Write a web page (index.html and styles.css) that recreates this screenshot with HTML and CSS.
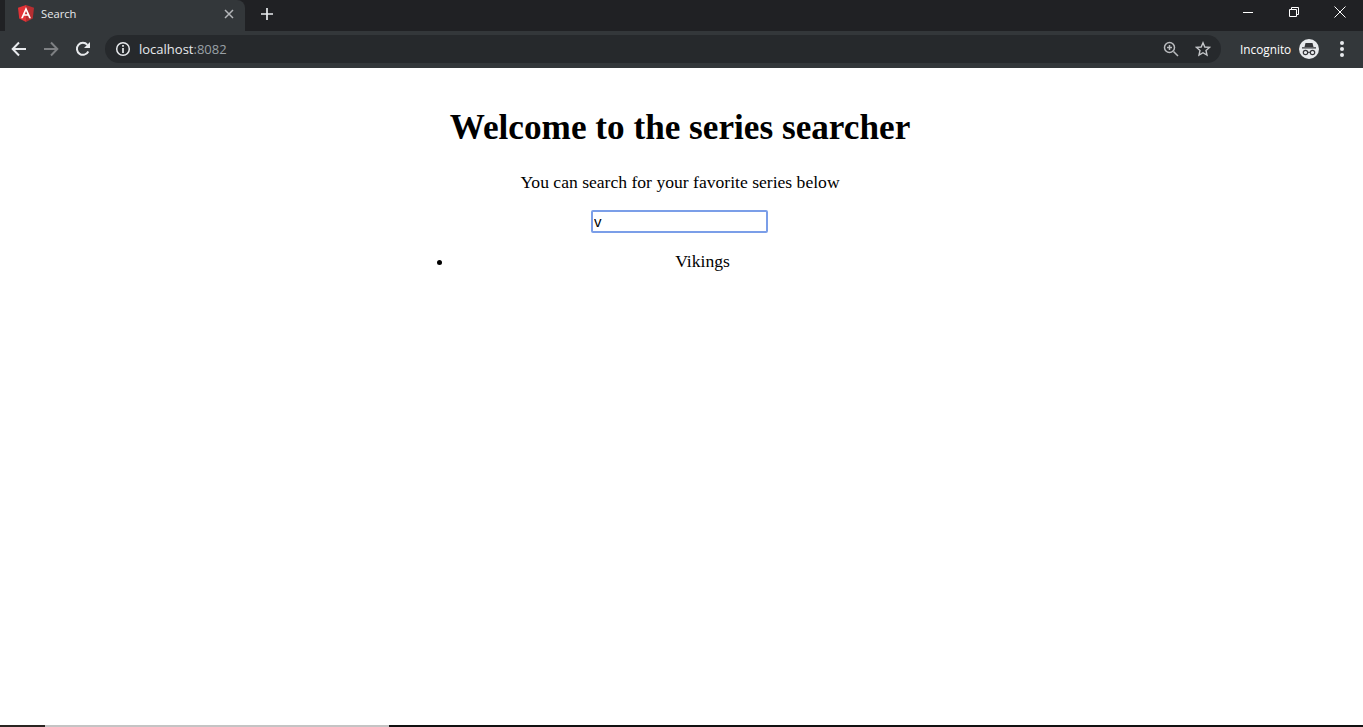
FILE: index.html
```html
<!DOCTYPE html>
<html lang="en">
<head>
  <meta charset="UTF-8">
  <title>Search</title>
  <link rel="stylesheet" href="styles.css">
</head>
<body>
  <header class="browser">
    <div class="tab-strip">
      <div class="tab">
        <svg class="tab-logo" width="16" height="17" viewBox="0 0 16 17">
          <path fill="#e23237" d="M8 0 0 2.800l1.200 10.600L8 17z"/>
          <path fill="#b52e31" d="M8 0l8 2.800-1.200 10.600L8 17z"/>
          <path fill="#fff" d="M8 2 3 13.200h1.900l1-2.500h4.200l1 2.500H13zM8 6l1.400 3.200H6.600z"/>
        </svg>
        <span class="tab-title">Search</span>
        <svg class="tab-close" width="10" height="10" viewBox="0 0 10 10">
          <path d="M1 1l8 8M9 1 1 9" stroke="#b4b6b9" stroke-width="1.500" fill="none"/>
        </svg>
      </div>
      <svg class="new-tab" width="14" height="14" viewBox="0 0 14 14">
        <path d="M7 1v12M1 7h12" stroke="#e8eaed" stroke-width="1.700" fill="none"/>
      </svg>
      <div class="window-controls">
        <svg width="12" height="12" viewBox="0 0 12 12"><path d="M1 6.500h10" stroke="#fff" fill="none"/></svg>
        <svg width="12" height="12" viewBox="0 0 12 12"><path d="M1.500 3.500h7v7h-7zM3.500 3.500v-2h7v7h-2" stroke="#fff" fill="none"/></svg>
        <svg width="12" height="12" viewBox="0 0 12 12"><path d="M.5.500l11 11M11.500.500l-11 11" stroke="#fff" fill="none"/></svg>
      </div>
    </div>
    <div class="toolbar">
      <svg class="nav-icon" width="16" height="16" viewBox="0 0 16 16">
        <path d="M15 8H2M8 1.500 1.700 8 8 14.500" stroke="#e8eaed" stroke-width="2" fill="none"/>
      </svg>
      <svg class="nav-icon" width="16" height="16" viewBox="0 0 16 16">
        <path d="M1 8h13M8 1.500 14.300 8 8 14.500" stroke="#7e8083" stroke-width="2" fill="none"/>
      </svg>
      <svg class="nav-icon" width="16" height="16" viewBox="0 0 16 16">
        <path d="M13.300 10.500A6 6 0 1 1 12.400 3.800" stroke="#e8eaed" stroke-width="2" fill="none"/>
        <path d="M15 1v6H9z" fill="#e8eaed"/>
      </svg>
      <div class="omnibox">
        <svg width="16" height="16" viewBox="0 0 16 16">
          <circle cx="8" cy="8" r="6.300" stroke="#e8eaed" stroke-width="1.500" fill="none"/>
          <path d="M8 7v5M8 4v1.700" stroke="#e8eaed" stroke-width="1.700" fill="none"/>
        </svg>
        <span class="url">localhost<span class="url-port">:8082</span></span>
        <svg class="omni-zoom" width="16" height="16" viewBox="0 0 16 16">
          <circle cx="6.500" cy="6.500" r="5" stroke="#b9bbbe" stroke-width="1.500" fill="none"/>
          <path d="M10.500 10.500 15 15M4 6.500h5M6.500 4v5" stroke="#b9bbbe" stroke-width="1.500" fill="none"/>
        </svg>
        <svg width="16" height="16" viewBox="0 0 16 16">
          <path d="M8 1.800 9.800 6l4.700.4-3.500 3.100 1 4.600L8 11.700l-4 2.400 1-4.600-3.500-3.100L6.200 6z" stroke="#c4c6c9" stroke-width="1.400" fill="none"/>
        </svg>
      </div>
      <span class="profile-name">Incognito</span>
      <svg class="profile-icon" width="20" height="20" viewBox="0 0 20 20">
        <circle cx="10" cy="10" r="10" fill="#e8eaed"/>
        <path d="M6.500 4h7l1 4h-9zM3 8.300h14v1.200H3z" fill="#35363a"/>
        <circle cx="6.500" cy="13.500" r="2.200" stroke="#35363a" stroke-width="1.200" fill="none"/>
        <circle cx="13.500" cy="13.500" r="2.200" stroke="#35363a" stroke-width="1.200" fill="none"/>
        <path d="M8.700 13.300h2.600" stroke="#35363a" fill="none"/>
      </svg>
      <div class="menu-dots"><i></i><i></i><i></i></div>
    </div>
  </header>

  <main class="page">
    <div class="intro">
      <h1>Welcome to the series searcher</h1>
      <p>You can search for your favorite series below</p>
      <input class="search-box" type="text" value="v">
    </div>
    <ul class="results">
      <li>Vikings</li>
    </ul>
  </main>

  <div class="taskbar-edge">
    <div class="edge-start"></div>
    <div class="edge-active"></div>
    <div class="edge-rest"></div>
  </div>
</body>
</html>
```

FILE: styles.css
```css
body {
  margin: 0;
  height: 100vh;
  display: flex;
  flex-direction: column;
  overflow: hidden;
  background-color: #fff;
  color: #000;
  font-family: "Liberation Serif", serif;
  font-size: 17.6px;
}
.browser {
  font-family: "Open Sans", sans-serif;
  color: #e8eaed;
}
.tab-strip {
  height: 31px;
  display: flex;
  align-items: center;
  background-color: #202124;
  padding-left: 5px;
}
.tab {
  width: 240px;
  height: 31px;
  box-sizing: border-box;
  display: flex;
  align-items: center;
  padding: 0 11px 4px 13px;
  background-color: #33373a;
  border-radius: 0 8px 0 0;
}
.tab-logo {
  flex: none;
}
.tab-title {
  margin-left: 7px;
  font-size: 11.200px;
  flex: 1;
}
.new-tab {
  margin: 0 0 4px 15px;
}
.window-controls {
  margin-left: auto;
  display: flex;
  gap: 34px;
  padding: 0 17px 8px 0;
}
.toolbar {
  height: 37px;
  box-sizing: border-box;
  display: flex;
  align-items: center;
  background-color: #33373a;
  padding: 0 0 2px 11px;
}
.nav-icon {
  margin-right: 16px;
  flex: none;
}
.omnibox {
  width: 1116px;
  height: 28px;
  box-sizing: border-box;
  margin-left: -2px;
  display: flex;
  align-items: center;
  padding: 0 10px;
  background-color: #26292c;
  border-radius: 14px;
}
.url {
  margin-left: 8px;
  font-size: 13px;
  flex: 1;
}
.url-port {
  color: #9aa0a6;
}
.omni-zoom {
  margin-right: 16px;
}
.profile-name {
  margin-left: 19px;
  font-size: 11.800px;
  color: #fff;
}
.profile-icon {
  margin-left: 8px;
}
.menu-dots {
  margin-left: 21px;
  display: flex;
  flex-direction: column;
  gap: 2px;
}
.menu-dots i {
  width: 4px;
  height: 4px;
  background-color: #e8eaed;
  border-radius: 50%;
}
.page {
  flex: 1;
  text-align: center;
  padding-top: 39px;
}
.intro {
  padding-right: 3px;
}
h1 {
  margin: 0;
  font-size: 35.200px;
  line-height: 41px;
}
p {
  margin: 24px 0 0;
  line-height: 21px;
}
.search-box {
  display: block;
  width: 177px;
  height: 23px;
  box-sizing: border-box;
  margin: 17px calc(50% - 88px) 0 auto;
  padding: 0 1px;
  border: 2px solid #7b9ee8;
  border-radius: 2px;
  outline: none;
  font-family: "Liberation Sans", sans-serif;
  font-size: 15px;
}
.results {
  width: 498px;
  margin: 18px auto 0;
  padding: 0 0 0 42px;
  line-height: 21px;
}
.taskbar-edge {
  height: 2px;
  display: flex;
}
.edge-start {
  width: 45px;
  background-color: #2a2522;
}
.edge-active {
  width: 344px;
  background-color: #c4c4c4;
}
.edge-rest {
  flex: 1;
  background-color: #111;
}
```
